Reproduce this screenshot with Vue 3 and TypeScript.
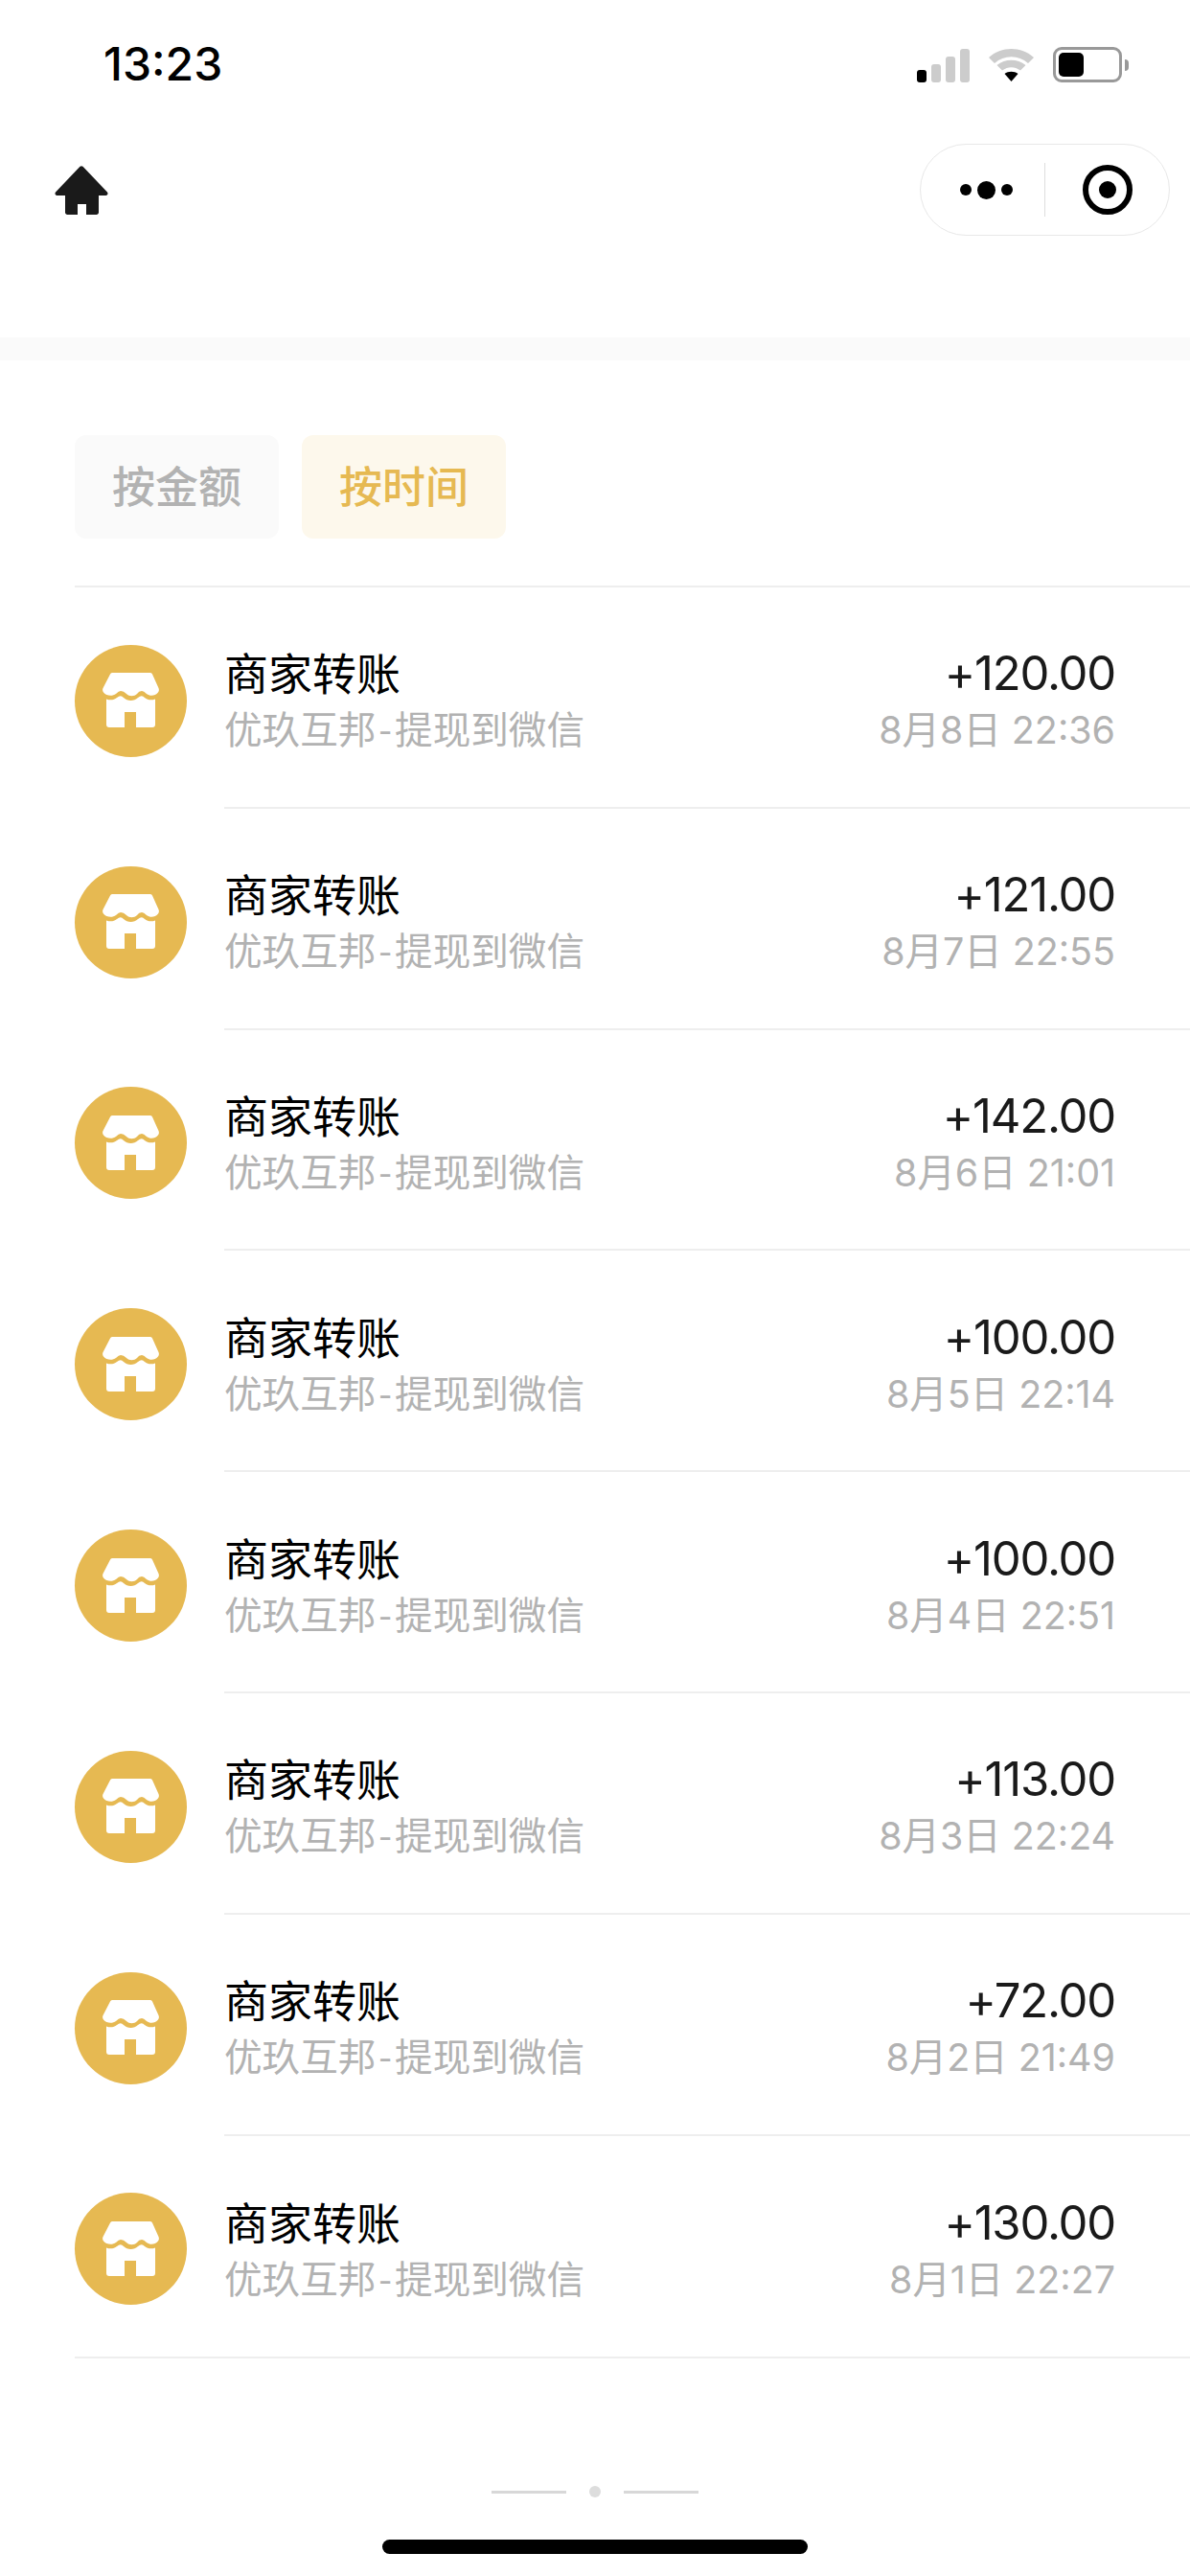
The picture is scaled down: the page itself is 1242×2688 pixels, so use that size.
<script setup lang="ts">
interface Row {
  amount: string
  time: string
}
const rows: Row[] = [
  { amount: '+120.00', time: '8月8日 22:36' },
  { amount: '+121.00', time: '8月7日 22:55' },
  { amount: '+142.00', time: '8月6日 21:01' },
  { amount: '+100.00', time: '8月5日 22:14' },
  { amount: '+100.00', time: '8月4日 22:51' },
  { amount: '+113.00', time: '8月3日 22:24' },
  { amount: '+72.00', time: '8月2日 21:49' },
  { amount: '+130.00', time: '8月1日 22:27' },
]
</script>

<template>
  <div class="page">
    <div class="status">
      <span class="clock">13:23</span>
      <div class="status-icons">
        <svg width="55" height="36" viewBox="0 0 55 36">
          <rect x="0" y="23" width="10" height="13" rx="3" fill="#000" />
          <rect x="15" y="17" width="10" height="19" rx="3" fill="#ccc" />
          <rect x="30" y="9" width="10" height="27" rx="3" fill="#ccc" />
          <rect x="45" y="1" width="10" height="35" rx="3" fill="#ccc" />
        </svg>
        <svg width="47" height="36" viewBox="0 0 47 36">
          <path d="M0 10C13 -2 34 -2 47 10L41 16C31 7 16 7 6 16Z" fill="#ccc" />
          <path d="M8.500 18C17 11 30 11 38.500 18L33 23.500C27 19 20 19 14 23.500Z" fill="#ccc" />
          <path d="M16.500 27C20 24 27 24 30.500 27L23.500 35Z" fill="#000" />
        </svg>
        <div class="battery"><div class="battery-fill"></div></div>
        <div class="battery-tip"></div>
      </div>
    </div>

    <div class="navbar">
      <svg class="home" width="56" height="51" viewBox="0 0 56 51">
        <path d="M26.500 .8Q28 -.4 29.500 .8L55 27.500C56 29 55.500 31 53.500 31H46V48.500C46 50 45 51 43.500 51H33V40H24V51H13.500C12 51 11 50 11 48.500V31H2.500C.5 31 0 29 1 27.500Z" fill="#1a1a1a" />
      </svg>
      <div class="capsule">
        <div class="dots">
          <span class="dot"></span>
          <span class="dot big"></span>
          <span class="dot"></span>
        </div>
        <span class="capsule-line"></span>
        <div class="target"><span class="target-core"></span></div>
      </div>
    </div>

    <div class="band"></div>

    <div class="tabs">
      <div class="tab">按金额</div>
      <div class="tab active">按时间</div>
    </div>

    <div class="list">
      <div v-for="(row, i) in rows" :key="i" class="row">
        <div class="avatar">
          <svg width="60" height="58" viewBox="0 0 60 58">
            <path d="M8 1.500Q8.500 0 10 0H50Q51.500 0 52 1.500L58.500 16Q59.500 18.500 58 20.500C55 24 50 25 46 22Q43 19 41 19Q38 19 36 22C33 25 28 25 25 22Q22 19 19 19Q17 19 14 22C10 25 4 24 1 20.500Q-.5 18.500 .5 16Z" fill="#fff" />
            <path d="M4 27.500C8 29 12 28.500 15 26Q19 22.500 22 26C26 30 33 30 37 26Q41 22.500 44 26C47 28.500 51 29 55 27.500V54Q55 57 52 57H35V41H23V57H7Q4 57 4 54Z" fill="#fff" />
          </svg>
        </div>
        <div class="body">
          <div class="info">
            <div class="title">商家转账</div>
            <div class="sub">优玖互邦<span class="dash">-</span>提现到微信</div>
          </div>
          <div class="right">
            <div class="amount">{{ row.amount }}</div>
            <div class="time">{{ row.time }}</div>
          </div>
        </div>
      </div>
    </div>

    <div class="footer">
      <div class="loader">
        <span class="loader-line"></span>
        <span class="loader-dot"></span>
        <span class="loader-line"></span>
      </div>
      <div class="home-indicator"></div>
    </div>
  </div>
</template>

<style scoped>
.page {
  width: 1242px;
  height: 2688px;
  background: #fff;
  display: flex;
  flex-direction: column;
  overflow: hidden;
  font-family: "Noto Sans CJK SC", "Noto Sans", sans-serif;
}
.status {
  height: 132px;
  flex: none;
  padding: 0 64px 0 108px;
  box-sizing: border-box;
  display: flex;
  align-items: flex-start;
  justify-content: space-between;
}
.clock {
  margin-top: 42px;
  font-family: Inter, "Liberation Sans", sans-serif;
  font-size: 48px;
  line-height: 50px;
  font-weight: 500;
  color: #000;
}
.status-icons {
  margin-top: 49px;
  display: flex;
  align-items: center;
  gap: 20px;
}
.battery {
  width: 72px;
  height: 37px;
  box-sizing: border-box;
  border: 3px solid #999;
  border-radius: 9px;
  padding: 3px;
}
.battery-fill {
  width: 26px;
  height: 25px;
  background: #000;
  border-radius: 5px;
}
.battery-tip {
  width: 4px;
  height: 12px;
  margin-left: -17px;
  background: #999;
  border-radius: 0 6px 6px 0;
}
.navbar {
  height: 220px;
  flex: none;
  padding: 18px 21px 0 57px;
  box-sizing: border-box;
  display: flex;
  align-items: flex-start;
  justify-content: space-between;
}
.home {
  margin-top: 23px;
}
.capsule {
  width: 261px;
  height: 96px;
  box-sizing: border-box;
  border: 1px solid #e8e8e8;
  border-radius: 48px;
  display: flex;
  align-items: center;
}
.dots {
  width: 129px;
  padding-left: 7px;
  box-sizing: border-box;
  display: flex;
  align-items: center;
  justify-content: center;
  gap: 6px;
}
.dot {
  width: 12px;
  height: 12px;
  border-radius: 50%;
  background: #000;
}
.dot.big {
  width: 19px;
  height: 19px;
}
.capsule-line {
  width: 1px;
  height: 56px;
  background: #ddd;
}
.target {
  margin-left: 39px;
  width: 52px;
  height: 52px;
  box-sizing: border-box;
  border: 6px solid #000;
  border-radius: 50%;
  display: flex;
  align-items: center;
  justify-content: center;
}
.target-core {
  width: 18px;
  height: 18px;
  border-radius: 50%;
  background: #000;
}
.band {
  height: 24px;
  flex: none;
  background: #fafafa;
}
.tabs {
  height: 235px;
  flex: none;
  padding: 78px 0 0 78px;
  box-sizing: border-box;
  display: flex;
  align-items: flex-start;
  gap: 24px;
}
.tab {
  width: 213px;
  height: 108px;
  border-radius: 12px;
  background: #fafafa;
  color: #b2b2b2;
  font-size: 45px;
  font-weight: 500;
  line-height: 104px;
  text-align: center;
}
.tab.active {
  background: #fdf8ec;
  color: #e6b952;
}
.list {
  flex: none;
  margin-left: 78px;
  border-top: 2px solid #eee;
  border-bottom: 2px solid #eee;
  display: flex;
  flex-direction: column;
}
.row {
  height: 230.8px;
  flex: none;
  box-sizing: border-box;
  display: flex;
  align-items: center;
}
.avatar {
  width: 117px;
  height: 117px;
  flex: none;
  margin-top: 6px;
  border-radius: 50%;
  background: #e6b952;
  display: flex;
  align-items: center;
  justify-content: center;
}
.body {
  margin-left: 39px;
  flex: 1;
  height: 100%;
  padding: 4px 78px 0 0;
  box-sizing: border-box;
  border-bottom: 2px solid #eee;
  display: flex;
  align-items: center;
  justify-content: space-between;
}
.row:last-child .body {
  border-bottom: 0;
}
.title {
  font-size: 46px;
  line-height: 60px;
  color: #000;
}
.sub {
  font-size: 39.6px;
  line-height: 58px;
  color: #b2b2b2;
}
.dash {
  margin: 0 3px;
}
.right {
  padding-top: 6px;
  text-align: right;
}
.amount {
  font-family: Inter, "Noto Sans", sans-serif;
  font-size: 49px;
  letter-spacing: -1.2px;
  line-height: 60px;
  color: #1a1a1a;
}
.time {
  font-family: Inter, "Noto Sans CJK SC", sans-serif;
  font-size: 39.4px;
  line-height: 58px;
  color: #b2b2b2;
}
.footer {
  flex: 1;
  display: flex;
  flex-direction: column;
  align-items: center;
}
.loader {
  margin-top: 133px;
  display: flex;
  align-items: center;
  gap: 24px;
}
.loader-line {
  width: 78px;
  height: 3px;
  background: #d8d8d8;
}
.loader-dot {
  width: 12px;
  height: 12px;
  border-radius: 50%;
  background: #ddd;
}
.home-indicator {
  margin-top: 44px;
  width: 444px;
  height: 15px;
  border-radius: 8px;
  background: #000;
}
</style>
